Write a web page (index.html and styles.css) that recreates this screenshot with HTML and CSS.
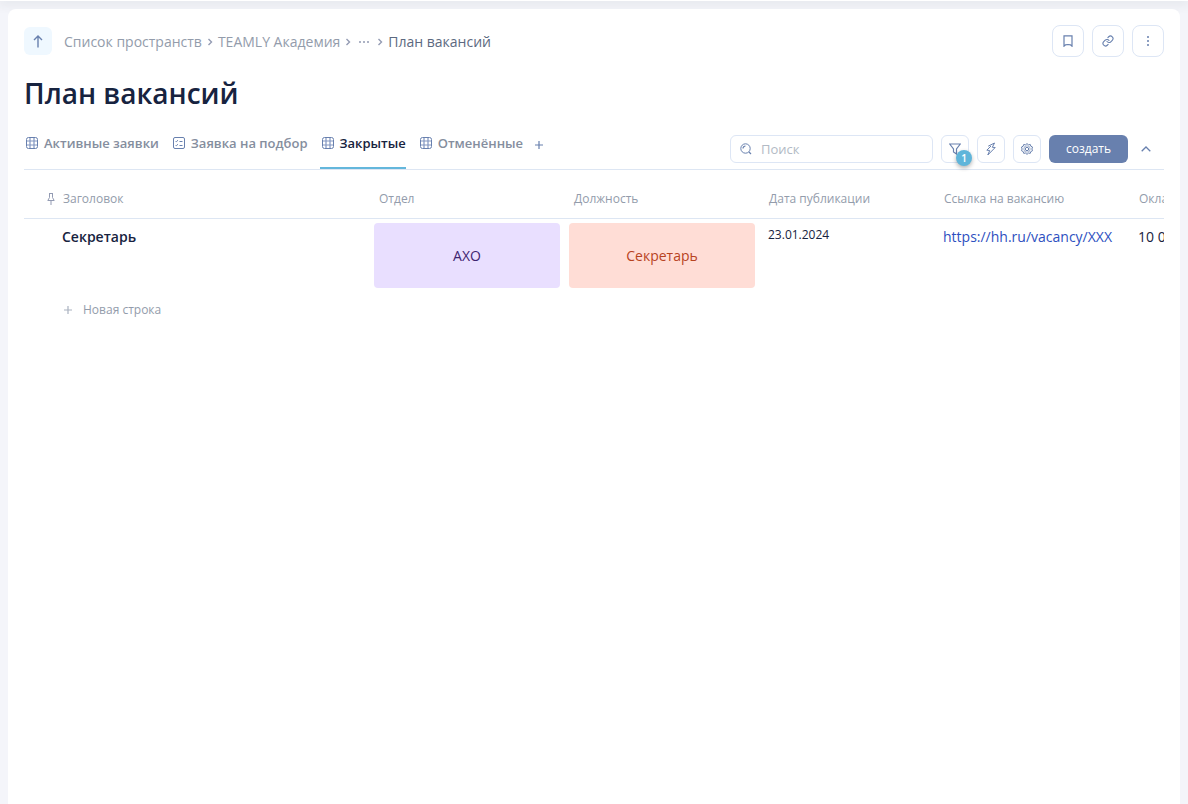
FILE: index.html
```html
<!DOCTYPE html>
<html lang="ru">
<head>
<meta charset="utf-8">
<meta name="viewport" content="width=device-width, initial-scale=1">
<title>План вакансий</title>
<link rel="stylesheet" href="styles.css">
</head>
<body>
<svg class="sprite" aria-hidden="true">
  <symbol id="grid" viewBox="0 0 12 12"><path d="M4 1v10M8 1v10M1 4h10M1 8h10" stroke-width="1.2" stroke="#8397c1"/><rect x=".5" y=".5" width="11" height="11" rx="2"/></symbol>
  <symbol id="form" viewBox="0 0 12 12"><rect x=".5" y=".5" width="11" height="11" rx="1.5"/><path d="M2.500 4l.8.8L5 3.200M2.500 8l.8.8L5 7.200M6.500 4.500h3M6.500 8.500h3"/></symbol>
  <symbol id="chevron" viewBox="0 0 6 8"><path d="M1.500 1L4.500 4l-3 3" stroke-width="1.4"/></symbol>
  <symbol id="plus" viewBox="0 0 8 8"><path d="M4 0v8M0 4h8" stroke-width="1.2"/></symbol>
</svg>
<div class="topbar"></div>
<main class="panel">
  <header class="header">
    <button class="up" aria-label="На уровень выше"><svg width="10" height="13" viewBox="0 0 10 13"><path d="M5 12.5V1M1 5l4-4 4 4" stroke-width="1.4"/></svg></button>
    <nav class="crumbs" aria-label="Навигация">
      <a href="#">Список пространств</a>
      <svg width="6" height="8"><use href="#chevron"/></svg>
      <a href="#">TEAMLY Академия</a>
      <svg width="6" height="8"><use href="#chevron"/></svg>
      <button class="more" aria-label="Показать все"><svg width="12" height="4" viewBox="0 0 12 4"><path d="M1 2h2M5 2h2M9 2h2" stroke-width="1.6"/></svg></button>
      <svg width="6" height="8"><use href="#chevron"/></svg>
      <a href="#" class="current">План вакансий</a>
    </nav>
    <div class="actions">
      <button class="square large" aria-label="Закладка"><svg width="10" height="12" viewBox="0 0 10 12"><path d="M1 .8h8v10.4L7.500 9.800 5 9.500l-2.500.300L1 11.200z" stroke-width="1.2"/></svg></button>
      <button class="square large" aria-label="Ссылка"><svg width="12" height="12" viewBox="0 0 24 24" stroke-width="2.200" stroke-linecap="round"><path d="M10 13a5 5 0 0 0 7.540.540l3-3a5 5 0 0 0-7.070-7.070l-1.720 1.710M14 11a5 5 0 0 0-7.540-.540l-3 3a5 5 0 0 0 7.070 7.070l1.710-1.710"/></svg></button>
      <button class="square large" aria-label="Меню"><svg width="4" height="12" viewBox="0 0 4 12"><path d="M1 2h2M1 6h2M1 10h2" stroke-width="1.700"/></svg></button>
    </div>
  </header>
  <h1 class="title">План вакансий</h1>
  <div class="toolbar">
    <nav class="tabs" aria-label="Представления">
      <a href="#" class="tab"><svg width="12" height="12"><use href="#grid"/></svg>Активные заявки</a>
      <a href="#" class="tab"><svg width="12" height="12"><use href="#form"/></svg>Заявка на подбор</a>
      <a href="#" class="tab active" aria-current="page"><svg width="12" height="12"><use href="#grid"/></svg>Закрытые</a>
      <a href="#" class="tab"><svg width="12" height="12"><use href="#grid"/></svg>Отменённые</a>
      <button class="add-tab" aria-label="Добавить представление"><svg width="8" height="8"><use href="#plus"/></svg></button>
    </nav>
    <div class="tools">
      <label class="search">
        <svg width="12" height="12" viewBox="0 0 12 12"><circle cx="5.500" cy="5.500" r="4.700"/><path d="M3 5.500A2.500 2.500 0 0 1 5.500 3M9 9l2 2" stroke-width="1.200"/></svg>
        <input type="text" placeholder="Поиск" aria-label="Поиск">
      </label>
      <button class="square" aria-label="Фильтр"><svg width="12" height="12" viewBox="0 0 12 12"><path d="M.7 1h10.600L7.500 6v5L4.500 9V6z" stroke-width="1.200"/></svg><span class="badge">1</span></button>
      <button class="square" aria-label="Автоматизация"><svg width="10" height="14" viewBox="0 0 10 14"><path d="M2.200 4.200L8.500 1 6.300 5.300l2.900.2L1.800 13l1.900-4.500-2.900-.3 4.200-4.200"/></svg></button>
      <button class="square" aria-label="Настройки"><svg width="12" height="12" viewBox="0 0 12 12"><path d="M6 .6l1.400 1.200 1.900-.3.500 1.700 1.700.8-.6 2 .6 1.700-1.700.9-.5 1.700-1.900-.2L6 11.400l-1.400-1.300-1.900.2-.5-1.700-1.700-.9.6-1.700-.6-2 1.700-.8.5-1.700 1.900.3z"/><circle cx="6" cy="6" r="3.200" stroke-width=".6"/><circle cx="6" cy="6" r="1.700"/></svg></button>
      <button class="create">создать</button>
      <button class="collapse" aria-label="Свернуть"><svg width="10" height="6" viewBox="0 0 10 6"><path d="M.7 5.300L5 1l4.300 4.300" stroke-width="1.300"/></svg></button>
    </div>
  </div>
  <div class="table-wrap">
    <table class="table">
      <colgroup><col class="c-title"><col class="c-wide"><col class="c-wide"><col class="c-date"><col class="c-wide"><col class="c-wide"></colgroup>
      <thead>
        <tr>
          <th scope="col"><span class="pinned"><svg width="8" height="12" viewBox="0 0 8 12"><path d="M2 .5h4M2.500.5v4L.8 7.500h6.400L5.500 4.500v-4M4 7.500V12"/></svg>Заголовок</span></th>
          <th scope="col">Отдел</th>
          <th scope="col">Должность</th>
          <th scope="col">Дата публикации</th>
          <th scope="col">Ссылка на вакансию</th>
          <th scope="col">Оклад</th>
        </tr>
      </thead>
      <tbody>
        <tr>
          <td class="name">Секретарь</td>
          <td class="tag-cell"><div class="tag violet">АХО</div></td>
          <td class="tag-cell"><div class="tag coral">Секретарь</div></td>
          <td class="date">23.01.2024</td>
          <td><a class="link" href="#">https://hh.ru/vacancy/XXX</a></td>
          <td>10 000</td>
        </tr>
      </tbody>
    </table>
  </div>
  <button class="new-row"><svg width="8" height="8"><use href="#plus"/></svg>Новая строка</button>
</main>
</body>
</html>
```

FILE: styles.css
```css
* { box-sizing: border-box; }
body {
  margin: 0;
  min-height: 100vh;
  display: flex;
  flex-direction: column;
  background: #f4f5fa;
  color: #172340;
  font: 14px/20px "Open Sans", "Noto Sans", sans-serif;
}
button { margin: 0; padding: 0; border: 0; background: none; font: inherit; color: inherit; }
a { color: inherit; text-decoration: none; }
svg { flex: none; fill: none; stroke: #6880ae; }
.sprite { position: absolute; width: 0; height: 0; }
.topbar { height: 1px; background: #fff; box-shadow: 0 0 12px 2px rgba(40, 60, 60, .14); }
.panel {
  position: relative;
  flex: 1;
  margin: 8px 8px 0;
  padding: 16px;
  border-radius: 8px 8px 0 0;
  background: #fff;
}
.header { display: flex; align-items: center; }
.up {
  display: flex; align-items: center; justify-content: center;
  width: 28px; height: 28px; margin-right: 12px;
  border-radius: 6px; background: #eff8ff;
}
.crumbs { display: flex; align-items: center; gap: 5px; color: #939cab; padding-top: 2px; }
.crumbs svg { stroke: #939bb3; }
.crumbs .current { color: #5c6980; }
.more { display: flex; padding: 0 2px; }
.actions { display: flex; gap: 8px; margin-left: auto; }
.square {
  position: relative;
  display: flex; align-items: center; justify-content: center;
  width: 28px; height: 28px;
  border: 1px solid #dde6f5; border-radius: 6px; background: #fff;
}
.square.large { width: 32px; height: 32px; border-radius: 8px; }
.title { margin: 16px 0 22px; font-size: 28px; line-height: 40px; font-weight: 600; }
.toolbar { display: flex; justify-content: space-between; border-bottom: 1px solid #dde6f3; }
.tabs { display: flex; gap: 12px; }
.tab {
  display: flex; align-items: flex-start; gap: 6px;
  height: 34px; padding-left: 2px;
  font-size: 13px; line-height: 16px; font-weight: 600; color: #858e9e;
}
.tab svg { margin-top: 2px; }
.tab.active { color: #172340; border-bottom: 2px solid #64b7dc; }
.add-tab { display: flex; align-self: flex-start; padding-top: 6px; }
.tools { display: flex; gap: 8px; }
.search {
  display: flex; align-items: center; gap: 9px;
  width: 203px; height: 28px; padding: 0 9px;
  border: 1px solid #dde6f5; border-radius: 6px;
}
.search input { flex: 1; min-width: 0; padding: 0; border: 0; outline: 0; background: none; font: inherit; font-size: 13px; color: #172340; }
.search input::placeholder { color: #b2bac5; opacity: 1; }
.badge {
  position: absolute; right: -4px; bottom: -4px;
  width: 16px; height: 16px; border-radius: 50%;
  background: #5fb5da; color: #fff;
  font-size: 10px; line-height: 16px; font-weight: 600; text-align: center;
  box-shadow: 0 2px 4px rgba(0, 0, 0, .3);
}
.create { min-width: 79px; height: 28px; padding: 0 16px; border-radius: 6px; background: #6880ae; color: #fff; font-size: 12px; font-weight: 500; line-height: 26px; }
.collapse { display: flex; align-items: center; height: 28px; padding: 0 13px 0 5px; }
.table-wrap { overflow: hidden; }
.table { width: 1301px; table-layout: fixed; border-collapse: separate; border-spacing: 0; }
.c-title { width: 346px; }
.c-wide { width: 195px; }
.c-date { width: 175px; }
.table th {
  height: 49px; padding: 10px 9px 0; border-bottom: 1px solid #dde6f3;
  text-align: left; font-size: 12px; line-height: 16px; font-weight: 400; color: #939cab;
}
.pinned { display: flex; align-items: center; gap: 8px; padding-left: 14px; }
.pinned svg { stroke: #939bb3; }
.table td { padding: 8px; vertical-align: top; }
.table .name { padding-left: 38px; font-weight: 600; }
.table .tag-cell { padding: 4px 5px 4px 4px; }
.table .date { font-size: 12px; line-height: 16px; }
.tag { display: flex; align-items: center; justify-content: center; height: 65px; border-radius: 4px; }
.violet { background: #e9dfff; color: #3f2470; }
.coral { background: #ffddd6; color: #b8431f; }
.link { color: #2d4fc0; }
.new-row { display: flex; align-items: center; gap: 11px; margin: 8px 0 0 40px; font-size: 12px; color: #939cab; }
.new-row svg { stroke: #aab2c0; }
```
